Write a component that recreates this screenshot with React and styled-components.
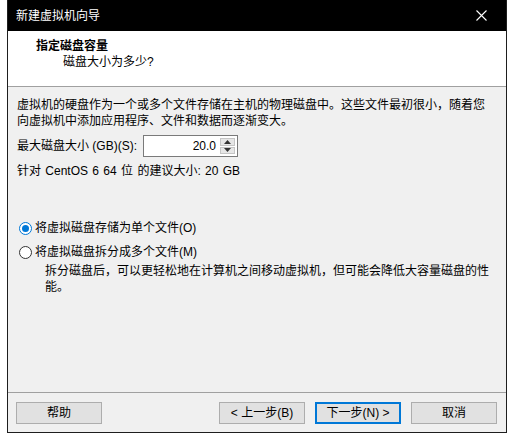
import React, { useState } from 'react';
import styled, { createGlobalStyle } from 'styled-components';

const GlobalStyle = createGlobalStyle`
  body {
    margin: 0;
    background: #fff;
    font-family: 'Liberation Sans', 'Noto Sans CJK SC', sans-serif;
    font-size: 12px;
  }
`;

const Page = styled.div`
  padding-left: 7px;
  width: 513px;
  height: 440px;
  box-sizing: border-box;
`;

const Window = styled.div`
  width: 500px;
  height: 433px;
  box-sizing: border-box;
  border: 1px solid #1e1e1e;
  border-top: none;
  display: flex;
  flex-direction: column;
  background: #f0f0f0;
`;

const TitleBar = styled.div`
  height: 31px;
  background: #000;
  color: #fff;
  display: flex;
  align-items: center;
  justify-content: space-between;
  padding: 0 10px 0 8px;
  line-height: 16px;
`;

const CloseBtn = styled.div`
  width: 30px;
  display: flex;
  justify-content: center;
  align-items: center;
`;

const Header = styled.div`
  height: 56px;
  background: #fff;
  border-bottom: 1px solid #a0a0a0;
  padding: 7px 0 0 28px;
  box-sizing: border-box;
  line-height: 16px;
  color: #000;
`;

const HeaderTitle = styled.div`
  font-weight: bold;
`;

const HeaderSub = styled.div`
  padding-left: 27px;
`;

const Body = styled.div`
  flex: 1;
  padding: 10px 9px 0 9px;
  line-height: 16px;
  color: #000;
`;

const Para = styled.div`
  white-space: nowrap;
`;

const SizeRow = styled.div`
  display: flex;
  align-items: center;
  gap: 6px;
  margin-top: 6px;
  height: 22px;
`;

const Spin = styled.div`
  width: 95px;
  height: 22px;
  box-sizing: border-box;
  border: 1px solid #7a7a7a;
  background: #fff;
  display: flex;
  align-items: stretch;
`;

const SpinValue = styled.div`
  flex: 1;
  text-align: right;
  padding-right: 4px;
  line-height: 20px;
`;

const SpinArrows = styled.div`
  width: 15px;
  display: flex;
  flex-direction: column;
  gap: 1px;
  padding: 2px 2px 2px 0;
`;

const SpinArrow = styled.div`
  flex: 1;
  background: #e6e6e6;
  border: 1px solid #c5c5c5;
  display: flex;
  align-items: center;
  justify-content: center;
`;

const Hint = styled.div`
  margin-top: 6px;
  word-spacing: 1px;
`;

const Options = styled.div`
  margin-top: 41px;
  display: flex;
  flex-direction: column;
  gap: 8px;
`;

const Option = styled.label`
  display: flex;
  align-items: center;
  gap: 3px;
  cursor: default;
  padding-left: 2px;
`;

const RadioDot = styled.span`
  width: 13px;
  height: 13px;
  box-sizing: border-box;
  border-radius: 50%;
  border: 1px solid ${(p) => (p.$on ? '#0078d7' : '#333')};
  background: #fff;
  display: flex;
  align-items: center;
  justify-content: center;

  &::after {
    content: '';
    width: 7px;
    height: 7px;
    border-radius: 50%;
    background: ${(p) => (p.$on ? '#0078d7' : 'transparent')};
  }
`;

const OptionNote = styled.div`
  padding-left: 28px;
  margin-top: 3px;
  white-space: nowrap;
`;

const Footer = styled.div`
  height: 40px;
  border-top: 1px solid #a0a0a0;
  display: flex;
  align-items: center;
  padding: 0 9px 0 8px;
  gap: 10px;
  box-sizing: border-box;
`;

const Spacer = styled.div`
  flex: 1;
`;

const Button = styled.button`
  width: 86px;
  height: 22px;
  box-sizing: border-box;
  background: #e1e1e1;
  border: 1px solid ${(p) => (p.$default ? '#0078d7' : '#adadad')};
  box-shadow: ${(p) => (p.$default ? 'inset 0 0 0 1px #0078d7' : 'none')};
  font-family: 'Liberation Sans', 'Noto Sans CJK SC', sans-serif;
  font-size: 12px;
  color: #000;
  padding: 0;
  line-height: 18px;
`;

export default function App() {
  const [split, setSplit] = useState(false);

  return (
    <Page>
      <GlobalStyle />
      <Window>
        <TitleBar>
          <span>新建虚拟机向导</span>
          <CloseBtn>
            <svg width="11" height="11" viewBox="0 0 11 11">
              <path d="M0.5 0.5 L10.5 10.5 M10.5 0.5 L0.5 10.5" stroke="#fff" strokeWidth="1.1" />
            </svg>
          </CloseBtn>
        </TitleBar>
        <Header>
          <HeaderTitle>指定磁盘容量</HeaderTitle>
          <HeaderSub>磁盘大小为多少?</HeaderSub>
        </Header>
        <Body>
          <Para>虚拟机的硬盘作为一个或多个文件存储在主机的物理磁盘中。这些文件最初很小，随着您</Para>
          <Para>向虚拟机中添加应用程序、文件和数据而逐渐变大。</Para>
          <SizeRow>
            <span>最大磁盘大小 (GB)(S):</span>
            <Spin>
              <SpinValue>20.0</SpinValue>
              <SpinArrows>
                <SpinArrow>
                  <svg width="7" height="4" viewBox="0 0 7 4"><path d="M0 4 L3.5 0 L7 4 Z" fill="#333" /></svg>
                </SpinArrow>
                <SpinArrow>
                  <svg width="7" height="4" viewBox="0 0 7 4"><path d="M0 0 L3.5 4 L7 0 Z" fill="#333" /></svg>
                </SpinArrow>
              </SpinArrows>
            </Spin>
          </SizeRow>
          <Hint>针对 CentOS 6 64 位 的建议大小: 20 GB</Hint>
          <Options>
            <Option onClick={() => setSplit(false)}>
              <RadioDot $on={!split} />
              <span>将虚拟磁盘存储为单个文件(O)</span>
            </Option>
            <div>
              <Option onClick={() => setSplit(true)}>
                <RadioDot $on={split} />
                <span>将虚拟磁盘拆分成多个文件(M)</span>
              </Option>
              <OptionNote>
                拆分磁盘后，可以更轻松地在计算机之间移动虚拟机，但可能会降低大容量磁盘的性
                <br />
                能。
              </OptionNote>
            </div>
          </Options>
        </Body>
        <Footer>
          <Button>帮助</Button>
          <Spacer />
          <Button>&lt; 上一步(B)</Button>
          <Button $default>下一步(N) &gt;</Button>
          <Button>取消</Button>
        </Footer>
      </Window>
    </Page>
  );
}
